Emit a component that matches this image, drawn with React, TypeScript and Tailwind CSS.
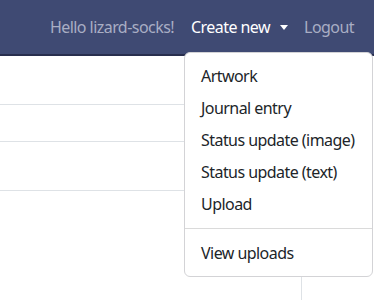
import React from "react";

export default function App() {
  const items = ["Artwork", "Journal entry", "Status update (image)", "Status update (text)", "Upload"];
  return (
    <div className="relative h-[300px] w-[374px] overflow-hidden bg-white tracking-[-0.55px]" style={{ fontFamily: '"Noto Sans", "Segoe UI", sans-serif' }}>
      <nav className="flex h-[56px] items-center justify-end border-b-2 border-[#282e4e] bg-[#3f4a73] pr-[20px] text-[16px]">
        <span className="whitespace-nowrap text-[#a9aec4]">Hello lizard-socks!</span>
        <div className="relative ml-[17px]">
          <span className="flex items-center whitespace-nowrap text-white">
            Create new
            <span className="ml-[10px] inline-block h-0 w-0 border-l-[4px] border-r-[4px] border-t-[5px] border-l-transparent border-r-transparent border-t-white"></span>
          </span>
        </div>
        <span className="ml-[16px] text-[#a9aec4]">Logout</span>
      </nav>
      <div className="w-[302px] border-r border-[#dee2e6]">
        <div className="h-[49px] border-b border-[#dee2e6]"></div>
        <div className="h-[37px] border-b border-[#dee2e6]"></div>
        <div className="h-[49px] border-b border-[#dee2e6]"></div>
        <div className="h-[110px]"></div>
      </div>
      <div className="absolute left-[184px] top-[52px] w-[189px] rounded-[6px] border border-[#d3d3d6] bg-white py-[7px] text-[16px] text-[#212529]">
        {items.map((t) => (
          <div key={t} className="flex h-[32px] items-center whitespace-nowrap px-[16px]">{t}</div>
        ))}
        <div className="my-[8px] border-t border-[#dadada]"></div>
        <div className="flex h-[32px] items-center whitespace-nowrap px-[16px]">View uploads</div>
      </div>
    </div>
  );
}
